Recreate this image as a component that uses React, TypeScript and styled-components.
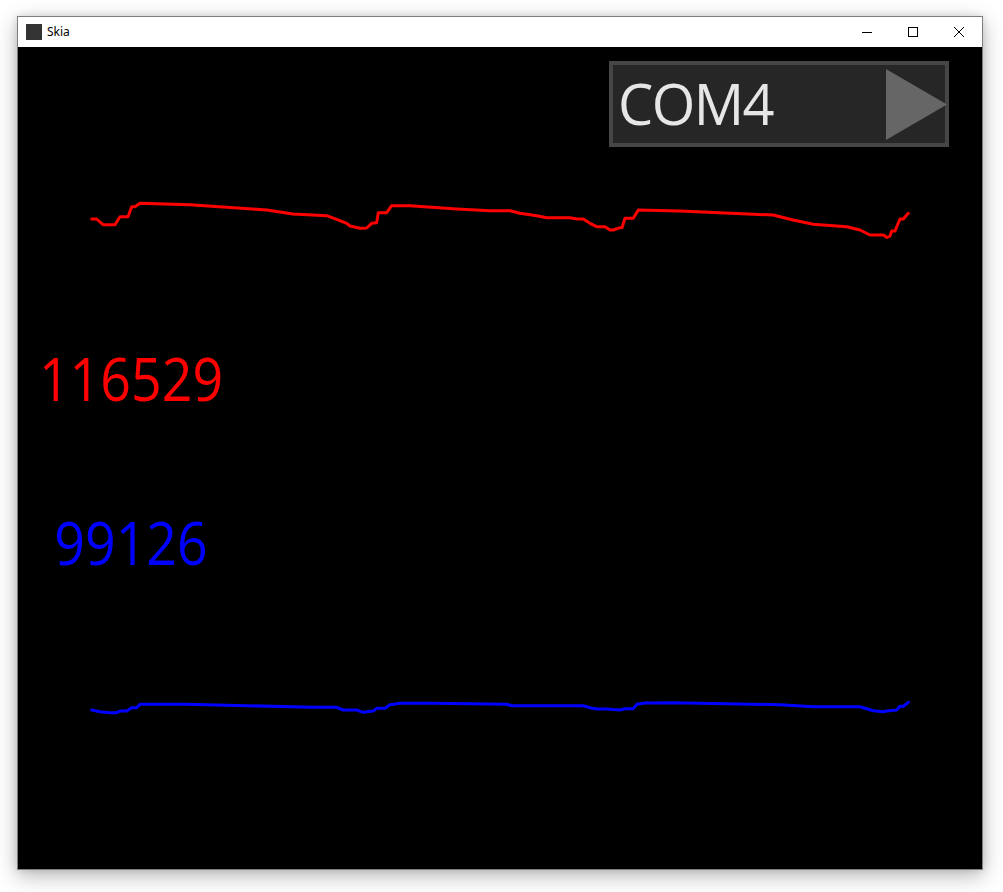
import React from "react";
import styled, { createGlobalStyle } from "styled-components";

const Global = createGlobalStyle`
  html, body { margin: 0; padding: 0; background: #ffffff; }
  body { width: 1003px; height: 892px; overflow: hidden; font-family: "Open Sans", "Noto Sans", sans-serif; }
`;

const Page = styled.div`
  padding: 16px 0 0 17px;
`;

const Window = styled.div`
  width: 964px;
  height: 852px;
  border: 1px solid #7e7e7e;
  display: flex;
  flex-direction: column;
  background: #000;
  box-shadow: 0 6px 20px rgba(0, 0, 0, 0.28), 0 0 8px rgba(0, 0, 0, 0.12);
`;

const TitleBar = styled.div`
  height: 30px;
  flex: 0 0 30px;
  background: #ffffff;
  display: flex;
  align-items: center;
`;

const AppIcon = styled.div`
  width: 16px;
  height: 16px;
  background: #333333;
  margin: 0 5px 0 8px;
`;

const Title = styled.span`
  font-family: "Noto Sans", "Open Sans", sans-serif;
  font-size: 12px;
  color: #000;
  flex: 1;
  line-height: 30px;
`;

const CaptionButton = styled.div`
  width: 46px;
  height: 30px;
  display: flex;
  align-items: center;
  justify-content: center;
`;

const Client = styled.div`
  flex: 1;
  display: flex;
  flex-direction: column;
  background: #000;
`;

const Header = styled.div`
  display: flex;
  justify-content: flex-end;
  padding: 14px 33px 0 0;
`;

const PortBox = styled.div`
  width: 332px;
  height: 78px;
  border: 4px solid #464646;
  background: #262626;
  display: flex;
  align-items: center;
  justify-content: space-between;
`;

const PortLabel = styled.span`
  font-family: "Open Sans", "Noto Sans", sans-serif;
  font-size: 56px;
  line-height: 56px;
  letter-spacing: -1.6px;
  color: #e6e6e6;
  padding-left: 5px;
  margin-top: -2px;
`;

const PlayIcon = styled.svg`
  width: 61px;
  height: 71px;
  margin-right: -2px;
  margin-top: 1px;
`;

const Wave = styled.svg<{ $top: number }>`
  display: block;
  margin-top: ${(p) => p.$top}px;
  flex: 0 0 auto;
`;

const Reading = styled.div<{ $color: string; $top: number }>`
  width: 226px;
  text-align: center;
  font-family: "Open Sans", "Noto Sans", sans-serif;
  font-size: 61px;
  line-height: 61px;
  height: 61px;
  color: ${(p) => p.$color};
  margin-top: ${(p) => p.$top}px;
  transform: scaleX(0.88);
  transform-origin: 113px 0;
`;

const red: [number, number][] = [
  [91.7, 219], [96.7, 219], [103, 224.7], [115, 224.7], [120, 216.7], [128, 216.7],
  [131.7, 206.7], [135, 206.7], [140, 203.3], [190, 204.7], [266.7, 210], [293, 214],
  [326.7, 215.7], [336.7, 219.3], [346.7, 223.3], [350, 226], [360, 228.3], [366.7, 228],
  [371.7, 223.3], [376.7, 222.7], [378.3, 212.7], [386.7, 212.7], [391.7, 205.7], [410, 205.7],
  [456.7, 209], [490, 210.7], [510, 210.7], [520, 213.3], [536.7, 215.7], [546.7, 217.7],
  [570, 217.7], [576.7, 219], [583.3, 219], [590, 223.3], [596.7, 226.7], [605, 226.7],
  [610, 230], [613.3, 230], [620, 227.7], [622, 227.7], [625, 218.3], [633.3, 218.3],
  [638.3, 210], [680, 211], [753.3, 214.3], [773.3, 215], [793, 220], [813.3, 224.3],
  [846.7, 226.7], [860, 230], [870, 235], [883.3, 235], [887, 237.5], [890, 236], [891.7, 231],
  [895, 231], [900, 219], [903.3, 219], [908.3, 213.3],
];

const blue: [number, number][] = [
  [91.7, 710], [100, 711.7], [110, 712.7], [116.7, 712.7], [120, 711], [126.7, 711],
  [131.7, 707.7], [136.7, 707.7], [140, 704.3], [186.7, 704.3], [246.7, 705.7], [313.3, 707.3],
  [336.7, 707.3], [343.3, 710], [356.7, 710], [363.3, 712.3], [373.3, 711], [376.7, 708.3],
  [385, 708.3], [390, 704.7], [400, 703.3], [433, 703.3], [506.7, 704.3], [511.7, 705.7],
  [583.3, 705.7], [590, 707.7], [596.7, 709], [606.7, 709], [620, 710], [625, 708.7],
  [633.3, 708.7], [636.7, 704.3], [645, 703], [673.3, 702.7], [780, 704.7], [813.3, 706.7],
  [860, 706.7], [866.7, 708.7], [873.3, 710.7], [883.3, 711.7], [886.7, 711], [896.7, 710],
  [900, 706.3], [903.3, 706.3], [908.3, 702.3],
];

const toPoints = (pts: [number, number][]) => pts.map(([x, y]) => `${x},${y}`).join(" ");

const Trace: React.FC<{ pts: [number, number][]; color: string; y0: number; h: number; top: number }> = ({
  pts,
  color,
  y0,
  h,
  top,
}) => (
  <Wave $top={top} width={964} height={h} viewBox={`18 ${y0} 964 ${h}`}>
    <polyline points={toPoints(pts)} fill="none" stroke={color} strokeWidth={3} strokeLinejoin="round" strokeLinecap="round" />
  </Wave>
);

export default function App() {
  return (
    <>
      <Global />
      <Page>
        <Window>
          <TitleBar>
            <AppIcon />
            <Title>Skia</Title>
            <CaptionButton>
              <svg width="10" height="10" viewBox="0 0 10 10">
                <line x1="0" y1="5.5" x2="10" y2="5.5" stroke="#000" strokeWidth="1" />
              </svg>
            </CaptionButton>
            <CaptionButton>
              <svg width="10" height="10" viewBox="0 0 10 10">
                <rect x="0.5" y="0.5" width="9" height="9" fill="none" stroke="#000" strokeWidth="1" />
              </svg>
            </CaptionButton>
            <CaptionButton>
              <svg width="10" height="10" viewBox="0 0 10 10">
                <path d="M0 0 L10 10 M10 0 L0 10" stroke="#000" strokeWidth="1" />
              </svg>
            </CaptionButton>
          </TitleBar>
          <Client>
            <Header>
              <PortBox>
                <PortLabel>COM4</PortLabel>
                <PlayIcon viewBox="0 0 61 71">
                  <polygon points="0,0 61,35.5 0,71" fill="#666666" />
                </PlayIcon>
              </PortBox>
            </Header>
            <Trace pts={red} color="#ff0000" y0={190} h={60} top={43} />
            <Reading $color="#ff0000" $top={97}>116529</Reading>
            <Reading $color="#0000ff" $top={103}>99126</Reading>
            <Trace pts={blue} color="#0000ff" y0={690} h={30} top={118} />
          </Client>
        </Window>
      </Page>
    </>
  );
}
